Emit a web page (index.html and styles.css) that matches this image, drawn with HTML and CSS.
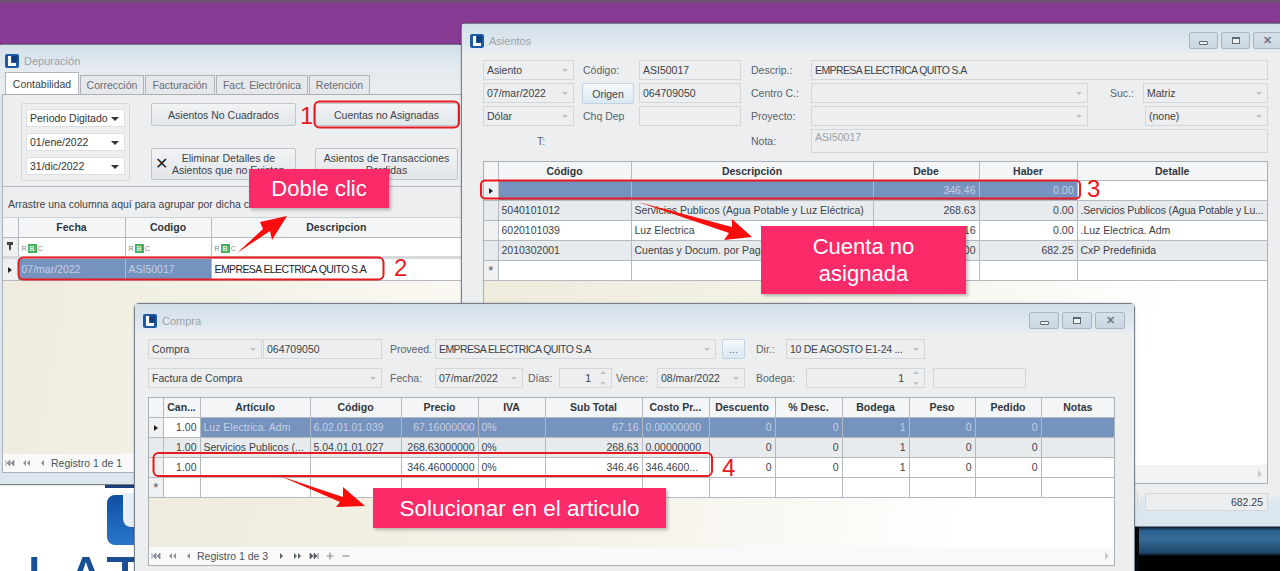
FILE: index.html
```html
<!DOCTYPE html>
<html lang="es">
<head>
    <meta charset="UTF-8" />
    <meta name="viewport" content="width=device-width, initial-scale=1" />
    <title>Cuentas no asignadas</title>
    <link rel="stylesheet" href="styles.css">
</head>
<body>
    <svg class="defs" width="0" height="0">
        <symbol id="app" viewBox="0 0 14 14"><rect width="14" height="14" rx="2" fill="#1d5aa6"/><path d="M3 2h3v7h5v3H3z" fill="#fff"/><path d="M7 2h5v6H7z" fill="#0f3d7c"/></symbol>
        <symbol id="first" viewBox="0 0 10 8"><path d="M1 1v6M5 1 2 4l3 3zM9 1 6 4l3 3z" fill="#8a9199" stroke="#8a9199" stroke-width=".8"/></symbol>
        <symbol id="prevpage" viewBox="0 0 10 8"><path d="M5 1 2 4l3 3zM9 1 6 4l3 3z" fill="#8a9199"/></symbol>
        <symbol id="prev" viewBox="0 0 10 8"><path d="M7 1 4 4l3 3z" fill="#8a9199"/></symbol>
        <symbol id="next" viewBox="0 0 10 8"><path d="M3 1l3 3-3 3z" fill="#5a6068"/></symbol>
        <symbol id="nextpage" viewBox="0 0 10 8"><path d="M1 1l3 3-3 3zM5 1l3 3-3 3z" fill="#5a6068"/></symbol>
        <symbol id="last" viewBox="0 0 10 8"><path d="M1 1l3 3-3 3zM5 1l3 3-3 3zM9 1v6" fill="#5a6068" stroke="#5a6068" stroke-width=".8"/></symbol>
        <symbol id="plus" viewBox="0 0 10 8"><path d="M5 .5v7M1.5 4h7" stroke="#8a9199" stroke-width="1.2" fill="none"/></symbol>
        <symbol id="minus" viewBox="0 0 10 8"><path d="M1.5 4h7" stroke="#8a9199" stroke-width="1.2" fill="none"/></symbol>
    </svg>

    <div class="desktop">
        <div class="wallpaper-logo">
            <div class="logo-bar"></div>
            <div class="logo-u"></div>
            <div class="logo-text">LAT</div>
        </div>
        <div class="wallpaper-photo"></div>

        <!-- Depuracion -->
        <section class="window win-depuracion">
            <header class="titlebar titlebar-dep">
                <svg class="app-icon"><use href="#app"/></svg>
                <span class="win-title">Depuración</span>
            </header>
            <nav class="tabs">
                <span class="tab tab-active">Contabilidad</span>
                <span class="tab tab-w64">Corrección</span>
                <span class="tab tab-w70">Facturación</span>
                <span class="tab tab-w92">Fact. Electrónica</span>
                <span class="tab tab-w61">Retención</span>
            </nav>
            <div class="pane">
                <div class="dep-tools">
                    <div class="dep-range">
                        <div class="combo combo-live">Periodo Digitado</div>
                        <div class="combo combo-live">01/ene/2022</div>
                        <div class="combo combo-live">31/dic/2022</div>
                    </div>
                    <div class="dep-buttons">
                        <button class="btn">Asientos No Cuadrados</button>
                        <button class="btn">Cuentas no Asignadas</button>
                        <button class="btn btn-icon"><span class="x-mark">✕</span><span>Eliminar Detalles de<br>Asientos que no Existen</span></button>
                        <button class="btn">Asientos de Transacciones<br>Perdidas</button>
                    </div>
                </div>
                <div class="group-hint">Arrastre una columna aquí para agrupar por dicha columna</div>
                <div class="grid-box grid-dep">
                    <table class="grid">
                        <colgroup><col class="c15"><col class="c107"><col class="c86"><col></colgroup>
                        <tr><th></th><th>Fecha</th><th>Codigo</th><th>Descripcion</th></tr>
                        <tr class="filter-row">
                            <td class="ind"><svg width="6" height="9" viewBox="0 0 6 9"><path d="M0 0h6v3H4v4L3 9 2 7V3H0z" fill="#444"/></svg></td>
                            <td><span class="abc">R<b>B</b>C</span></td>
                            <td><span class="abc">R<b>B</b>C</span></td>
                            <td><span class="abc">R<b>B</b>C</span></td>
                        </tr>
                        <tr class="row-first">
                            <td class="ind"><i class="arrow"></i></td>
                            <td class="sel">07/mar/2022</td>
                            <td class="sel">ASI50017</td>
                            <td class="dark caps">EMPRESA ELECTRICA QUITO S.A</td>
                        </tr>
                    </table>
                    <div class="cream"></div>
                    <div class="pager">
                        <svg><use href="#first"/></svg><svg><use href="#prevpage"/></svg><svg><use href="#prev"/></svg>
                        <span class="pager-text">Registro 1 de 1</span>
                    </div>
                </div>
            </div>
        </section>

        <!-- Asientos -->
        <section class="window win-asientos">
            <header class="titlebar">
                <svg class="app-icon"><use href="#app"/></svg>
                <span class="win-title">Asientos</span>
                <div class="win-buttons">
                    <span class="win-btn"><i class="ic-min"></i></span>
                    <span class="win-btn"><i class="ic-max"></i></span>
                    <span class="win-btn win-close">✕</span>
                </div>
            </header>
            <div class="asi-form">
                <div class="combo">Asiento</div>
                <label class="lbl lbl-p9">Código:</label>
                <div class="field">ASI50017</div>
                <label class="lbl lbl-p10">Descrip.:</label>
                <div class="field span3 caps">EMPRESA ELECTRICA QUITO S.A</div>

                <div class="combo">07/mar/2022</div>
                <button class="btn btn-origen">Origen</button>
                <div class="field">064709050</div>
                <label class="lbl lbl-p10">Centro C.:</label>
                <div class="combo"></div>
                <label class="lbl lbl-p22">Suc.:</label>
                <div class="combo">Matriz</div>

                <div class="combo">Dólar</div>
                <label class="lbl lbl-p9">Chq Dep</label>
                <div class="field"></div>
                <label class="lbl lbl-p10">Proyecto:</label>
                <div class="combo"></div>
                <span></span>
                <div class="combo combo-none">(none)</div>

                <label class="lbl lbl-t">T:</label>
                <span></span>
                <label class="lbl lbl-p10">Nota:</label>
                <div class="field field-note span3">ASI50017</div>
            </div>
            <div class="grid-box grid-asi">
                <table class="grid">
                    <colgroup><col class="c14"><col class="c133"><col class="c242"><col class="c106"><col class="c98"><col></colgroup>
                    <tr><th></th><th>Código</th><th>Descripción</th><th>Debe</th><th>Haber</th><th>Detalle</th></tr>
                    <tr>
                        <td class="ind sel-ind"><i class="arrow"></i></td>
                        <td class="sel"></td><td class="sel"></td><td class="sel num">346.46</td><td class="sel num">0.00</td><td></td>
                    </tr>
                    <tr class="alt"><td class="ind"></td><td>5040101012</td><td>Servicios Publicos (Agua Potable y Luz Eléctrica)</td><td class="num">268.63</td><td class="num">0.00</td><td class="tight">.Servicios Publicos (Agua Potable y Lu...</td></tr>
                    <tr><td class="ind"></td><td>6020101039</td><td>Luz Electrica</td><td class="num">67.16</td><td class="num">0.00</td><td>.Luz Electrica. Adm</td></tr>
                    <tr class="alt"><td class="ind"></td><td>2010302001</td><td>Cuentas y Docum. por Pagar</td><td class="num">0.00</td><td class="num">682.25</td><td>CxP Predefinida</td></tr>
                    <tr><td class="ind star">*</td><td></td><td></td><td></td><td></td><td></td></tr>
                </table>
                <div class="cream"></div>
                <div class="pager pager-blank"><i class="scroll-right"></i></div>
            </div>
            <div class="asi-totals">
                <div class="field num total-a"></div>
                <div class="field num total-b">682.25</div>
            </div>
        </section>

        <!-- Compra -->
        <section class="window win-compra">
            <header class="titlebar">
                <svg class="app-icon"><use href="#app"/></svg>
                <span class="win-title">Compra</span>
                <div class="win-buttons">
                    <span class="win-btn"><i class="ic-min"></i></span>
                    <span class="win-btn"><i class="ic-max"></i></span>
                    <span class="win-btn win-close">✕</span>
                </div>
            </header>
            <div class="com-row com-row1">
                <div class="combo">Compra</div>
                <div class="field field-ml1">064709050</div>
                <label class="lbl lbl-p8">Proveed.</label>
                <div class="combo caps">EMPRESA ELECTRICA QUITO S.A</div>
                <button class="btn btn-dots">...</button>
                <label class="lbl lbl-p11">Dir.:</label>
                <div class="combo caps-soft">10 DE AGOSTO E1-24 ...</div>
            </div>
            <div class="com-row com-row2">
                <div class="combo">Factura de Compra</div>
                <label class="lbl lbl-p8">Fecha:</label>
                <div class="combo">07/mar/2022</div>
                <label class="lbl lbl-p5">Días:</label>
                <div class="field spin num">1</div>
                <label class="lbl lbl-p4">Vence:</label>
                <div class="combo">08/mar/2022</div>
                <label class="lbl lbl-p11">Bodega:</label>
                <div class="field spin num">1</div>
                <div class="field field-ml8"></div>
            </div>
            <div class="grid-box grid-com">
                <table class="grid">
                    <colgroup>
                        <col class="c14"><col class="c37"><col class="c110"><col class="c91"><col class="c77"><col class="c67"><col class="c97">
                        <col class="c67"><col class="c66"><col class="c67"><col class="c67"><col class="c66"><col class="c66"><col>
                    </colgroup>
                    <tr><th></th><th>Can...</th><th>Artículo</th><th>Código</th><th>Precio</th><th>IVA</th><th>Sub Total</th><th>Costo Pr...</th><th>Descuento</th><th>% Desc.</th><th>Bodega</th><th>Peso</th><th>Pedido</th><th>Notas</th></tr>
                    <tr>
                        <td class="ind"><i class="arrow"></i></td><td class="num">1.00</td>
                        <td class="sel">Luz Electrica. Adm</td><td class="sel">6.02.01.01.039</td><td class="sel num">67.16000000</td><td class="sel">0%</td><td class="sel num">67.16</td><td class="sel">0.00000000</td>
                        <td class="sel num">0</td><td class="sel num">0</td><td class="sel num">1</td><td class="sel num">0</td><td class="sel num">0</td><td class="sel"></td>
                    </tr>
                    <tr class="alt"><td class="ind"></td><td class="num">1.00</td><td>Servicios Publicos (...</td><td>5.04.01.01.027</td><td class="num">268.63000000</td><td>0%</td><td class="num">268.63</td><td>0.00000000</td><td class="num">0</td><td class="num">0</td><td class="num">1</td><td class="num">0</td><td class="num">0</td><td></td></tr>
                    <tr><td class="ind"></td><td class="num">1.00</td><td></td><td></td><td class="num">346.46000000</td><td>0%</td><td class="num">346.46</td><td>346.4600...</td><td class="num">0</td><td class="num">0</td><td class="num">1</td><td class="num">0</td><td class="num">0</td><td></td></tr>
                    <tr><td class="ind star">*</td><td></td><td></td><td></td><td></td><td></td><td></td><td></td><td></td><td></td><td></td><td></td><td></td><td></td></tr>
                </table>
                <div class="cream"></div>
                <div class="pager">
                    <svg><use href="#first"/></svg><svg><use href="#prevpage"/></svg><svg><use href="#prev"/></svg>
                    <span class="pager-text">Registro 1 de 3</span>
                    <svg><use href="#next"/></svg><svg><use href="#nextpage"/></svg><svg><use href="#last"/></svg><svg><use href="#plus"/></svg><svg><use href="#minus"/></svg>
                    <i class="scroll-right"></i>
                </div>
            </div>
        </section>

        <!-- anotaciones sobre la captura -->
        <svg class="marks" width="1280" height="571" viewBox="0 0 1280 571">
            <g fill="none" stroke="#e8191f" stroke-width="2">
                <rect x="314.5" y="101.5" width="144.5" height="26" rx="5"/>
                <rect x="18.5" y="257.5" width="365" height="22" rx="5"/>
                <rect x="481" y="180.5" width="599" height="18" rx="4"/>
                <rect x="153.5" y="453" width="558.5" height="23" rx="5"/>
            </g>
            <g fill="#fb0d0d">
                <path d="M237 253 263 229 260 222 287 216 272 240 270 231z"/>
                <path d="M638 202 732 227 732 219 752 237 724 240 729 233z"/>
                <path d="M280 476 343 497 343 487 365 506 336 507 340 502z"/>
            </g>
            <g class="mark-num">
                <text x="300" y="124">1</text>
                <text x="394" y="276">2</text>
                <text x="1087" y="197">3</text>
                <text x="722" y="476">4</text>
            </g>
        </svg>
        <div class="note note-doble">Doble clic</div>
        <div class="note note-cuenta">Cuenta no<br>asignada</div>
        <div class="note note-solucionar">Solucionar en el articulo</div>
    </div>
</body>
</html>
```

FILE: styles.css
```css
* {
    box-sizing: border-box;
}

body {
    margin: 0;
    font-family: "Liberation Sans", Arial, sans-serif;
    font-size: 10.5px;
    color: #3c4249;
}

.defs {
    position: absolute;
}

.desktop {
    position: relative;
    width: 1280px;
    height: 571px;
    overflow: hidden;
    background: linear-gradient(#6d5570 0, #6d5570 2px, #873b94 3px);
}

/* fondo de escritorio */
.wallpaper-logo {
    position: absolute;
    left: 0;
    top: 484px;
    width: 140px;
    height: 87px;
    background: #fff;
    overflow: hidden;
}

.logo-bar {
    position: absolute;
    left: 105px;
    top: 1px;
    width: 35px;
    height: 3px;
    background: #1d3f80;
}

.logo-u {
    position: absolute;
    left: 107px;
    top: 11px;
    width: 40px;
    height: 50px;
    border-radius: 8px;
    background: linear-gradient(#0e4ea3, #2a77c9);
}

.logo-u::after {
    content: "";
    position: absolute;
    left: 16px;
    top: -2px;
    width: 24px;
    height: 34px;
    border-radius: 0 0 0 8px;
    background: #e7eef7;
}

.logo-text {
    position: absolute;
    left: 26px;
    top: 64px;
    font-size: 64px;
    line-height: 64px;
    letter-spacing: 3px;
    color: #1a4f94;
}

.wallpaper-photo {
    position: absolute;
    left: 1130px;
    top: 527px;
    width: 150px;
    height: 44px;
    border-left: 9px solid #05080c;
    background: linear-gradient(#0c2036 0, #2a628f 4px, #356a98 12px, #1c466a 26px, #000 29px, #000 100%);
}

/* ventanas */
.window {
    position: absolute;
    border: 1px solid #77808a;
    border-radius: 5px 5px 0 0;
    background: linear-gradient(#dfe8f0, #e9edf1 30px);
    box-shadow: 0 0 2px rgba(0, 0, 0, 0.3);
}

.win-depuracion {
    left: -2px;
    top: 44px;
    width: 464px;
    height: 441px;
    background: #dde6ef;
}

.win-asientos {
    left: 461px;
    top: 23px;
    width: 822px;
    height: 504px;
    background: linear-gradient(#eceef0 470px, #dce6ef 480px);
}

.win-compra {
    left: 134px;
    top: 303px;
    width: 1001px;
    height: 290px;
    background: #eceef0;
}

.titlebar {
    display: flex;
    align-items: center;
    height: 28px;
    padding: 5px 0 0 8px;
    background: linear-gradient(#d3dfe9, #e6ecf1);
}

.titlebar-dep {
    padding: 5px 0 0 6px;
    height: 27px;
}

.app-icon {
    width: 14px;
    height: 14px;
    margin-right: 5px;
}

.win-title {
    font-size: 11px;
    color: #9aa3ac;
}

.win-buttons {
    display: flex;
    gap: 3px;
    margin-left: auto;
    padding-right: 9px;
}

.win-asientos .win-buttons {
    padding-right: 0;
}

.win-asientos .win-btn {
    width: 29px;
}

.win-btn {
    display: flex;
    align-items: center;
    justify-content: center;
    width: 30px;
    height: 17px;
    border: 1px solid #a9b6c2;
    border-radius: 2px;
    background: linear-gradient(#d6e0e9, #cad6e1);
    color: #737c85;
    font-size: 11px;
    font-weight: bold;
}

.ic-min {
    width: 9px;
    height: 4px;
    margin-top: 4px;
    border: 1px solid #5f6871;
    border-radius: 1px;
    background: #eef2f5;
}

.ic-max {
    width: 8px;
    height: 7px;
    border: 1px solid #5f6871;
    border-top-width: 2px;
    background: #eef2f5;
}

/* pestañas */
.tabs {
    display: flex;
    align-items: flex-end;
    height: 22px;
    padding-left: 6px;
    background: linear-gradient(#e4e9ee, #eceef0);
}

.tab {
    display: flex;
    align-items: center;
    justify-content: center;
    height: 19px;
    margin-right: 1px;
    border: 1px solid #aeb4ba;
    border-bottom: 0;
    background: #e6e8eb;
    color: #666d75;
}

.tab-active {
    width: 74px;
    height: 22px;
    border-color: #aeb4ba;
    background: #fff;
    color: #3c4249;
}

.tab-w64 { width: 64px; }
.tab-w70 { width: 70px; }
.tab-w92 { width: 92px; }
.tab-w61 { width: 61px; }

.pane {
    display: flex;
    flex-direction: column;
    height: 379px;
    margin-left: 3px;
    border: 1px solid #a9b0b6;
    border-right: 0;
    background: #eceef0;
}

.dep-tools {
    display: flex;
    flex: none;
    gap: 21px;
    height: 92px;
    padding: 8px 0 0 18px;
    border-bottom: 1px solid #b5bac0;
}

.dep-range {
    display: flex;
    flex-direction: column;
    gap: 6px;
    width: 109px;
    height: 78px;
    padding: 5px 4px;
    border: 1px solid #d4d8dc;
    border-radius: 2px;
}

.dep-buttons {
    display: grid;
    grid-template-columns: 145px 143px;
    grid-template-rows: 23px 32px;
    gap: 22px 19px;
}

.group-hint {
    flex: none;
    display: flex;
    align-items: center;
    height: 30px;
    padding: 3px 0 0 5px;
    color: #3c4249;
}

.btn {
    padding: 0;
    border: 1px solid #c0c6cc;
    border-radius: 2px;
    background: linear-gradient(#f1f3f5, #e3e6e9);
    font: inherit;
    color: #3c4249;
    line-height: 12px;
}

.btn-icon {
    display: flex;
    align-items: center;
    gap: 4px;
    padding-left: 3px;
    text-align: center;
}

.x-mark {
    font-size: 16px;
    color: #222;
}

.btn-origen {
    width: 52px;
    height: 21px;
    margin-left: 8px;
    border-color: #c3d3e3;
    background: linear-gradient(#f5f9fc, #dbe8f3);
}

.btn-dots {
    width: 23px;
    margin-left: 6px;
    border-color: #c3d3e3;
    background: linear-gradient(#f5f9fc, #dbe8f3);
    color: #3b5f8d;
}

.combo,
.field {
    position: relative;
    display: flex;
    align-items: center;
    min-width: 0;
    padding-left: 3px;
    border: 1px solid #d4d7da;
    background: #eceef0;
    white-space: nowrap;
    overflow: hidden;
}

.combo {
    padding-right: 14px;
}

.combo::after {
    content: "";
    position: absolute;
    right: 5px;
    top: 50%;
    margin-top: -1px;
    border: 3px solid transparent;
    border-top: 3px solid #bcc1c6;
    border-bottom: 0;
}

.combo-live {
    height: 19px;
    border-color: #dde0e3;
    background: #fff;
    color: #333;
}

.combo-live::after {
    border-top-color: #333;
    border-left-width: 4px;
    border-right-width: 4px;
    border-top-width: 4px;
}

.combo-none {
    margin-left: 2px;
}

.field.num {
    justify-content: flex-end;
    padding-right: 4px;
}

.span3 {
    grid-column: span 3;
}

.field-note {
    align-items: flex-start;
    padding-top: 1px;
    color: #9aa1a8;
}

.spin {
    padding-right: 20px !important;
}

.spin::before,
.spin::after {
    content: "";
    position: absolute;
    right: 5px;
    border: 3px solid transparent;
}

.spin::before {
    top: 2px;
    border-bottom-color: #c2c6ca;
    border-top: 0;
}

.spin::after {
    bottom: 2px;
    border-top-color: #c2c6ca;
    border-bottom: 0;
}

.lbl {
    display: flex;
    align-items: center;
    white-space: nowrap;
    color: #5b6269;
}

.lbl-p4 { padding-left: 4px; }
.lbl-p5 { padding-left: 5px; }
.lbl-p8 { padding-left: 8px; }
.lbl-p9 { padding-left: 9px; }
.lbl-p10 { padding-left: 10px; }
.lbl-p11 { padding-left: 11px; }
.lbl-p22 { padding-left: 22px; }
.lbl-t { grid-column: 1 / span 2; padding-left: 54px; }

.field-ml1 { margin-left: 1px; }
.field-ml8 { margin-left: 8px; }

/* texto en mayusculas, mas estrecho en la captura */
.caps {
    letter-spacing: -0.6px;
}

.caps-soft {
    letter-spacing: -0.3px;
}

/* formularios */
.asi-form {
    display: grid;
    grid-template-columns: 91px 65px 102px 70px 277px 55px 125px;
    grid-template-rows: 20px 20px 20px 24px;
    gap: 3px 0;
    padding: 8px 0 0 21px;
}

.com-row {
    display: grid;
    height: 20px;
    margin: 0 0 9px 13px;
}

.com-row1 {
    grid-template-columns: 114px 120px 53px 281px 29px 41px 139px;
    margin-top: 7px;
}

.com-row2 {
    grid-template-columns: 234px 53px 88px 36px 53px 45px 88px 61px 119px 101px;
}

/* tablas */
.grid-box {
    display: flex;
    flex-direction: column;
    border: 1px solid #a9b0b6;
    background: #fff;
}

.grid-dep {
    flex: 1;
    border-width: 0;
    border-top: 1px solid #ccd0d4;
}

.grid-asi {
    width: 785px;
    height: 323px;
    margin: 8px 0 0 21px;
}

.grid-com {
    width: 967px;
    height: 169px;
    margin: 1px 0 0 13px;
}

.grid {
    width: 100%;
    border-collapse: collapse;
    table-layout: fixed;
}

.grid th,
.grid td {
    height: 20px;
    padding: 0 3px;
    border: 1px solid #b3b9bf;
    white-space: nowrap;
    overflow: hidden;
    font-weight: normal;
}

.grid tr:first-child th {
    height: 19px;
    border-top: 0;
    background: #f4f5f6;
    font-weight: bold;
    color: #30363c;
}

.grid-asi .grid tr:first-child th {
    height: 18px;
}

.grid th:first-child,
.grid td:first-child {
    border-left: 0;
}

.grid th:last-child,
.grid td:last-child {
    border-right: 0;
}

.c14 { width: 14px; }
.c15 { width: 15px; }
.c37 { width: 37px; }
.c66 { width: 66px; }
.c67 { width: 67px; }
.c77 { width: 77px; }
.c86 { width: 86px; }
.c91 { width: 91px; }
.c97 { width: 97px; }
.c98 { width: 98px; }
.c106 { width: 106px; }
.c107 { width: 107px; }
.c110 { width: 110px; }
.c133 { width: 133px; }
.c242 { width: 242px; }

.num {
    text-align: right;
}

.tight {
    letter-spacing: -0.15px;
}

.grid .ind {
    padding: 0;
    background: #eef0f2;
    text-align: center;
}

.arrow {
    display: inline-block;
    border: 3px solid transparent;
    border-left: 4px solid #222;
    border-right: 0;
    vertical-align: middle;
}

.star {
    font-size: 13px;
    font-weight: bold;
    color: #555;
}

.grid .sel {
    background: #7692bf;
    color: #c6d1e2;
}

.grid .alt td {
    background: #e7ebed;
}

.dark {
    color: #1f2429;
}

.filter-row td {
    background: #fff;
}

.filter-row + .row-first td {
    height: 23px;
    border-top-width: 3px;
    border-top-color: #d7dadd;
}

.abc {
    font-size: 7px;
    color: #7f8a84;
}

.abc b {
    padding: 1px 2px;
    margin: 0 1px;
    background: #49b060;
    color: #e2f2e5;
}

.cream {
    flex: 1;
    background: linear-gradient(100deg, #efebdd, #f5f3ea 50%, #fff 85%);
}

.grid-dep .cream {
    background: linear-gradient(100deg, #efebdd, #f5f3ea 60%, #fbf9f3);
}

.pager {
    position: relative;
    display: flex;
    align-items: center;
    gap: 6px;
    height: 18px;
    flex: none;
    padding-left: 2px;
    background: #f9f9f9;
}

.pager svg {
    width: 10px;
    height: 8px;
}

.pager-text {
    margin: 0 3px 0 -2px;
    color: #4c535a;
}

.pager-blank {
    background: #f2f3f4;
}

.scroll-right {
    position: absolute;
    right: 5px;
    top: 5px;
    border: 4px solid transparent;
    border-left: 4px solid #c8ccd0;
    border-right: 0;
}

.asi-totals {
    display: flex;
    justify-content: flex-end;
    gap: 7px;
    width: 806px;
    height: 18px;
    margin-top: 9px;
}

.total-a {
    width: 120px;
}

.total-b {
    width: 123px;
}

/* anotaciones */
.marks {
    position: absolute;
    left: 0;
    top: 0;
}

.mark-num {
    font-family: "Liberation Sans", Arial, sans-serif;
    font-size: 24px;
    fill: #e8191f;
}

.note {
    position: absolute;
    display: flex;
    align-items: center;
    justify-content: center;
    background: #fb2a68;
    box-shadow: 2px 2px 3px rgba(0, 0, 0, 0.25);
    color: #fff;
    font-size: 22px;
    line-height: 27px;
    text-align: center;
}

.note-doble {
    left: 249px;
    top: 169px;
    width: 140px;
    height: 39px;
}

.note-cuenta {
    left: 761px;
    top: 226px;
    width: 205px;
    height: 68px;
}

.note-solucionar {
    left: 373px;
    top: 488px;
    width: 293px;
    height: 40px;
    font-size: 22.5px;
}
```
